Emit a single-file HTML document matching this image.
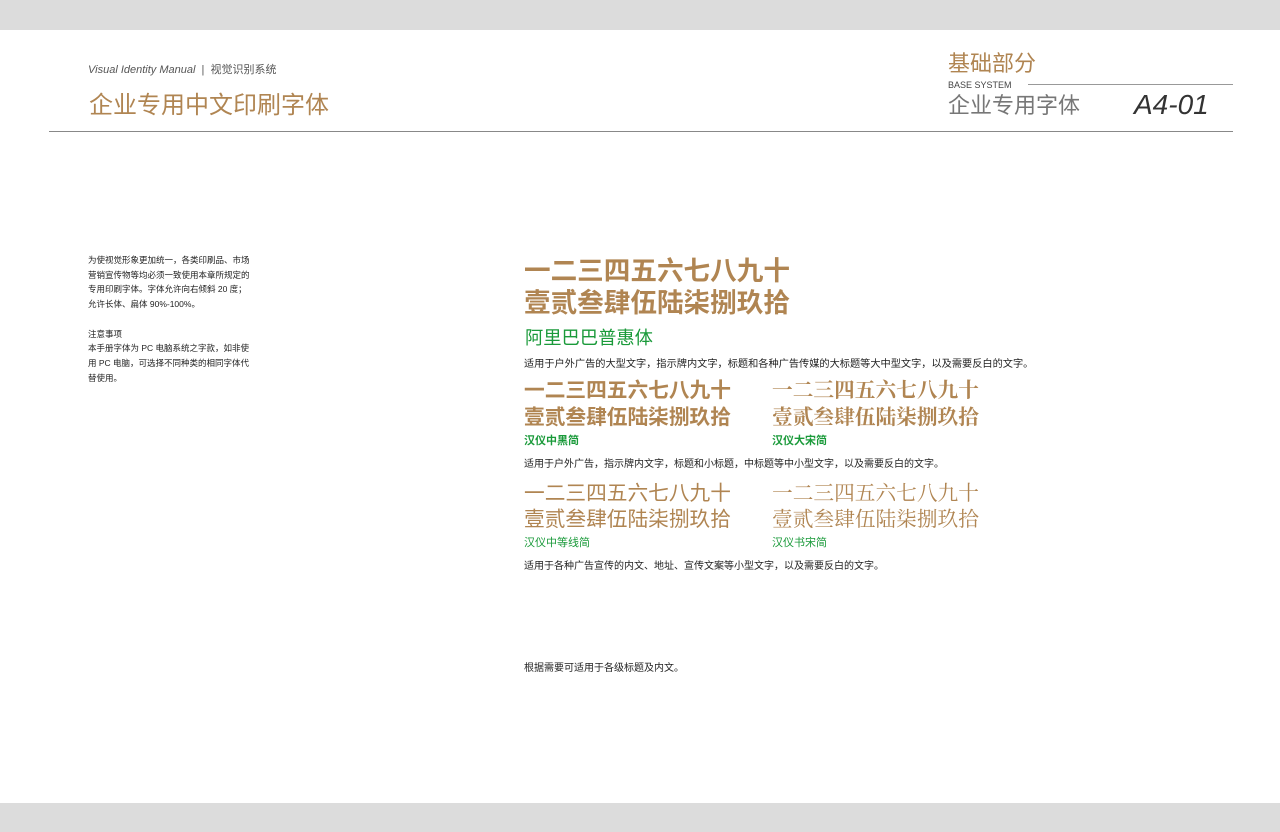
<!DOCTYPE html>
<html><head><meta charset="utf-8"><style>
*{margin:0;padding:0}
body{width:1280px;height:832px;position:relative;background:#fff;overflow:hidden;font-family:"Liberation Sans","Noto Sans CJK SC",sans-serif}
.a{position:absolute;white-space:nowrap;line-height:1}
.g{color:#b08552}
.gr{color:#1a9a3a}
.b{color:#222}
</style></head><body>
<div class="a" style="left:0;top:0;width:1280px;height:30px;background:#dcdcdc"></div>
<div class="a" style="left:0;top:803px;width:1280px;height:29px;background:#dcdcdc"></div>

<div class="a" style="left:88px;top:65px;font-size:11px;color:#555"><i>Visual Identity Manual</i> &nbsp;|&nbsp; 视觉识别系统</div>
<div class="a g" style="left:89px;top:94px;font-size:24px">企业专用中文印刷字体</div>
<div class="a" style="left:49px;top:131px;width:1184px;height:1px;background:#888"></div>

<div class="a g" style="left:948px;top:53px;font-size:22px">基础部分</div>
<div class="a" style="left:948px;top:81px;font-size:9px;color:#444">BASE SYSTEM</div>
<div class="a" style="left:1028px;top:84px;width:205px;height:1px;background:#999"></div>
<div class="a" style="left:948px;top:95px;font-size:22px;color:#777">企业专用字体</div>
<div class="a" style="left:1134px;top:91px;font-size:28px;font-style:italic;color:#333">A4-01</div>

<div class="a b" style="left:88px;top:253px;font-size:8.5px;line-height:14.7px">为使视觉形象更加统一，各类印刷品、市场<br>营销宣传物等均必须一致使用本章所规定的<br>专用印刷字体。字体允许向右倾斜 20 度；<br>允许长体、扁体 90%-100%。<br><br>注意事项<br>本手册字体为 PC 电脑系统之字款，如非使<br>用 PC 电脑，可选择不同种类的相同字体代<br>替使用。</div>

<div class="a g" style="left:524px;top:258px;font-size:26.6px;font-weight:bold">一二三四五六七八九十</div>
<div class="a g" style="left:524px;top:290px;font-size:26.6px;font-weight:bold">壹贰叁肆伍陆柒捌玖拾</div>
<div class="a gr" style="left:525px;top:329px;font-size:18.3px">阿里巴巴普惠体</div>
<div class="a b" style="left:524px;top:360px;font-size:10.2px">适用于户外广告的大型文字，指示牌内文字，标题和各种广告传媒的大标题等大中型文字，以及需要反白的文字。</div>

<div class="a g" style="left:524px;top:381px;font-size:20.7px;font-weight:bold">一二三四五六七八九十</div>
<div class="a g" style="left:524px;top:408px;font-size:20.7px;font-weight:bold">壹贰叁肆伍陆柒捌玖拾</div>
<div class="a g" style="left:772px;top:381px;font-size:20.7px;font-weight:bold;font-family:'Liberation Serif','Noto Serif CJK SC',serif">一二三四五六七八九十</div>
<div class="a g" style="left:772px;top:408px;font-size:20.7px;font-weight:bold;font-family:'Liberation Serif','Noto Serif CJK SC',serif">壹贰叁肆伍陆柒捌玖拾</div>
<div class="a gr" style="left:524px;top:436px;font-size:11px;font-weight:bold">汉仪中黑简</div>
<div class="a gr" style="left:772px;top:436px;font-size:11px;font-weight:bold">汉仪大宋简</div>
<div class="a b" style="left:524px;top:460px;font-size:10px">适用于户外广告，指示牌内文字，标题和小标题，中标题等中小型文字，以及需要反白的文字。</div>

<div class="a g" style="left:524px;top:484px;font-size:20.7px">一二三四五六七八九十</div>
<div class="a g" style="left:524px;top:510px;font-size:20.7px">壹贰叁肆伍陆柒捌玖拾</div>
<div class="a g" style="left:772px;top:484px;font-size:20.7px;font-family:'Liberation Serif','Noto Serif CJK SC',serif">一二三四五六七八九十</div>
<div class="a g" style="left:772px;top:510px;font-size:20.7px;font-family:'Liberation Serif','Noto Serif CJK SC',serif">壹贰叁肆伍陆柒捌玖拾</div>
<div class="a gr" style="left:524px;top:538px;font-size:11px">汉仪中等线简</div>
<div class="a gr" style="left:772px;top:538px;font-size:11px">汉仪书宋简</div>
<div class="a b" style="left:524px;top:562px;font-size:10px">适用于各种广告宣传的内文、地址、宣传文案等小型文字，以及需要反白的文字。</div>

<div class="a b" style="left:524px;top:664px;font-size:10px">根据需要可适用于各级标题及内文。</div>
</body></html>
